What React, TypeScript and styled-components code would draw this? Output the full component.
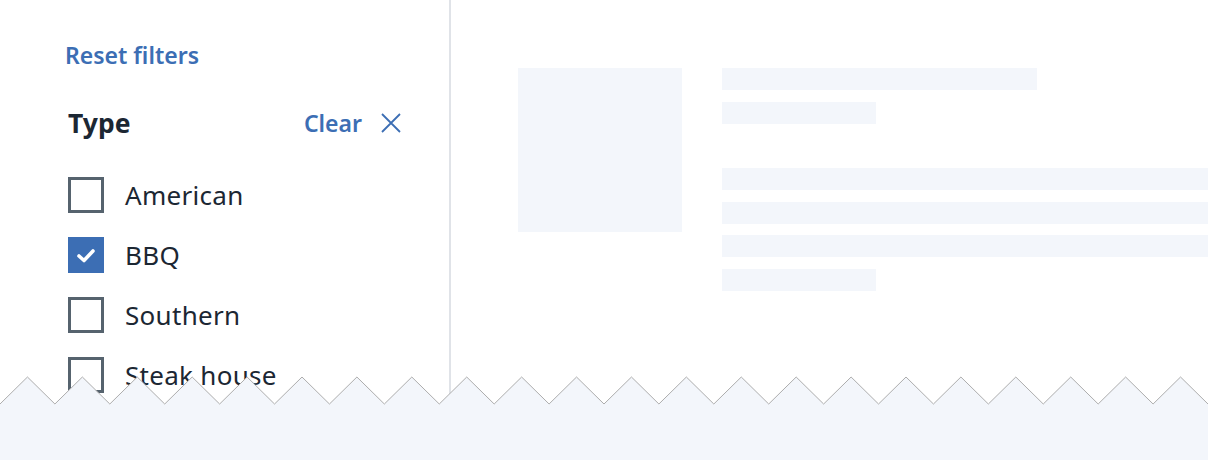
import React from "react";
import styled, { createGlobalStyle } from "styled-components";

const GlobalStyle = createGlobalStyle`
    html, body {
        margin: 0;
        padding: 0;
        background: #ffffff;
    }
    body {
        font-family: "Noto Sans", "Liberation Sans", sans-serif;
        color: #1c2733;
    }
`;

const blue = "#3c6eb4";
const skeleton = "#f3f6fb";

const types = [
    { label: "American", checked: false },
    { label: "BBQ", checked: true },
    { label: "Southern", checked: false },
    { label: "Steak house", checked: false },
];

const cards = [0, 1];

const CheckIcon = () => (
    <svg width="22" height="22" viewBox="0 0 22 22" fill="none">
        <path
            d="M4 12 L9 16.5 L18 7"
            stroke="#ffffff"
            strokeWidth="3.6"
            strokeLinecap="round"
            strokeLinejoin="round"
        />
    </svg>
);

const CloseIcon = () => (
    <svg width="20" height="20" viewBox="0 0 20 20" fill="none">
        <path d="M1 1 L19 19 M19 1 L1 19" stroke={blue} strokeWidth="1.8" />
    </svg>
);

const TornEdge = () => {
    const teeth = 22;
    const step = 1208 / teeth;
    const points: string[] = [];
    for (let i = 0; i <= teeth; i++) {
        points.push(`${i * step},28`);
        if (i < teeth) points.push(`${i * step + step / 2},1`);
    }
    const line = points.join(" ");
    return (
        <Torn>
            <svg width="1208" height="84" viewBox="0 0 1208 84">
                <polygon points={`${line} 1208,84 0,84`} fill={skeleton} />
                <polyline points={line} fill="none" stroke="#adadad" strokeWidth="1" />
            </svg>
        </Torn>
    );
};

const App: React.FC = () => {
    return (
        <Page>
            <GlobalStyle />
            <Sidebar>
                <ResetLink>Reset filters</ResetLink>
                <GroupHeader>
                    <GroupTitle>Type</GroupTitle>
                    <ClearButton>
                        Clear
                        <CloseIcon />
                    </ClearButton>
                </GroupHeader>
                <OptionList>
                    {types.map((t) => (
                        <Option key={t.label}>
                            <Box checked={t.checked}>{t.checked && <CheckIcon />}</Box>
                            <OptionLabel>{t.label}</OptionLabel>
                        </Option>
                    ))}
                </OptionList>
            </Sidebar>
            <Results>
                {cards.map((c) => (
                    <Card key={c}>
                        <Thumb />
                        <Lines>
                            <LineGroup>
                                <Bar width={315} />
                                <Bar width={154} />
                            </LineGroup>
                            <LineGroup>
                                <Bar width={600} />
                                <Bar width={600} />
                                <Bar width={600} />
                                <Bar width={154} />
                            </LineGroup>
                        </Lines>
                    </Card>
                ))}
            </Results>
            <TornEdge />
        </Page>
    );
};

const Page = styled.div`
    position: relative;
    display: flex;
    height: 460px;
    width: 1208px;
    overflow: hidden;
`;

const Sidebar = styled.aside`
    flex-shrink: 0;
    box-sizing: border-box;
    width: 451px;
    border-right: 2px solid #e0e3e8;
    padding: 40px 48px 0 65px;
`;

const ResetLink = styled.a`
    display: block;
    color: ${blue};
    font-size: 23px;
    font-weight: 600;
    line-height: 30px;
    cursor: pointer;
`;

const GroupHeader = styled.div`
    display: flex;
    align-items: center;
    justify-content: space-between;
    margin-top: 36px;
    padding-left: 3px;
`;

const GroupTitle = styled.h3`
    margin: 0;
    font-size: 26.5px;
    font-weight: 700;
    line-height: 34px;
    color: #1c2733;
`;

const ClearButton = styled.button`
    display: flex;
    align-items: center;
    gap: 19px;
    border: none;
    background: none;
    padding: 0;
    color: ${blue};
    font-family: inherit;
    font-size: 23px;
    font-weight: 600;
    line-height: 34px;
    cursor: pointer;
`;

const OptionList = styled.div`
    display: flex;
    flex-direction: column;
    gap: 24px;
    margin-top: 37px;
    padding-left: 3px;
`;

const Option = styled.label`
    display: flex;
    align-items: center;
    gap: 21px;
    height: 36px;
`;

const Box = styled.span<{ checked: boolean }>`
    display: flex;
    align-items: center;
    justify-content: center;
    flex-shrink: 0;
    width: 36px;
    height: 36px;
    box-sizing: border-box;
    border: ${(p) => (p.checked ? "none" : "3px solid #56636e")};
    background: ${(p) => (p.checked ? blue : "#ffffff")};
`;

const OptionLabel = styled.span`
    font-size: 26px;
    letter-spacing: 0.3px;
    color: #1c2733;
`;

const Results = styled.main`
    flex: 1;
    display: flex;
    flex-direction: column;
    gap: 124px;
    padding: 68px 0 0 67px;
    min-width: 0;
`;

const Card = styled.article`
    display: grid;
    grid-template-columns: 164px 1fr;
    gap: 40px;
`;

const Thumb = styled.div`
    width: 164px;
    height: 164px;
    background: ${skeleton};
`;

const Lines = styled.div`
    display: flex;
    flex-direction: column;
    gap: 44.5px;
    overflow: hidden;
`;

const LineGroup = styled.div`
    display: flex;
    flex-direction: column;
    gap: 11.5px;
`;

const Bar = styled.div<{ width: number }>`
    width: ${(p) => p.width}px;
    height: 22px;
    flex-shrink: 0;
    background: ${skeleton};
`;

const Torn = styled.div`
    position: absolute;
    left: 0;
    bottom: 0;
    height: 84px;
    width: 1208px;
    line-height: 0;
`;

export default App;
